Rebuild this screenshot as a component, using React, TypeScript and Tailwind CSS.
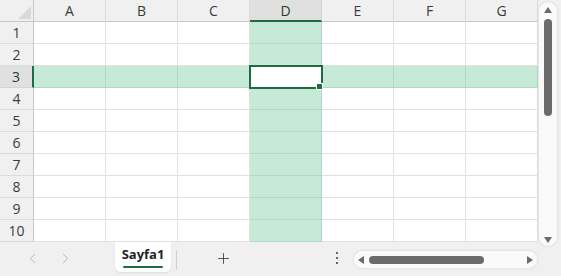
import React from "react";
import { ChevronLeft, ChevronRight, Plus } from "lucide-react";

const columns = ["A", "B", "C", "D", "E", "F", "G"];
const rows = [1, 2, 3, 4, 5, 6, 7, 8, 9, 10];
const activeCol = "D";
const activeRow = 3;

const Triangle: React.FC<{ dir: "up" | "down" | "left" | "right" }> = ({ dir }) => {
  const points = {
    up: "0,6 4,0 8,6",
    down: "0,0 8,0 4,6",
    left: "6,0 6,8 0,4",
    right: "0,0 0,8 6,4",
  }[dir];
  const size = dir === "up" || dir === "down" ? { w: 8, h: 6 } : { w: 6, h: 8 };
  return (
    <svg width={size.w} height={size.h} viewBox={`0 0 ${size.w} ${size.h}`}>
      <polygon points={points} fill="#6b6b6b" />
    </svg>
  );
};

const App: React.FC = () => {
  return (
    <div className="w-[561px] h-[276px] bg-[#f0f0f0] flex flex-col overflow-hidden font-['Open_Sans','Noto_Sans',sans-serif] text-[#3b3b3b]">
      <div className="flex h-[242px]">
        {/* Sheet grid */}
        <div className="w-[538px] bg-white grid grid-cols-[34px_repeat(7,72px)] grid-rows-[22px_repeat(10,22px)] text-[14px]">
          {/* Corner */}
          <div className="relative bg-[#f0f0f0] border-r border-b border-[#c8c8c8]">
            <svg className="absolute right-[2px] bottom-[2px]" width="13" height="13" viewBox="0 0 13 13">
              <polygon points="13,0 13,13 0,13" fill="#d9d9d9" />
            </svg>
          </div>
          {columns.map((c) =>
            c === activeCol ? (
              <div
                key={c}
                className="flex items-center justify-center bg-[#e0e0e0] border-r border-[#d4d4d4] border-b-2 border-b-[#1e6c41] text-[#1f3d2e]"
              >
                {c}
              </div>
            ) : (
              <div
                key={c}
                className="flex items-center justify-center bg-[#f0f0f0] border-r border-b border-r-[#dcdcdc] border-b-[#c8c8c8]"
              >
                {c}
              </div>
            )
          )}

          {rows.map((r) => (
            <React.Fragment key={r}>
              {r === activeRow ? (
                <div className="flex items-center justify-center bg-[#e0e0e0] border-b border-b-[#d4d4d4] border-r-2 border-r-[#1e6c41] text-[#1f3d2e]">
                  {r}
                </div>
              ) : (
                <div className="flex items-center justify-center bg-[#f0f0f0] border-r border-b border-r-[#c8c8c8] border-b-[#dcdcdc]">
                  {r}
                </div>
              )}
              {columns.map((c) => {
                if (c === activeCol && r === activeRow) {
                  return (
                    <div key={c} className="relative bg-white border-r border-b border-[#e1e1e1]">
                      <div className="absolute -left-px -top-px w-[74px] h-[24px] border-2 border-[#1e6c41] z-10">
                        <div className="absolute right-[-2px] bottom-[-3px] w-[7px] h-[7px] bg-[#1e6c41] border border-white" />
                      </div>
                    </div>
                  );
                }
                const lit = c === activeCol || r === activeRow;
                return (
                  <div
                    key={c}
                    className={
                      lit
                        ? "bg-[#c6ead7] border-r border-b border-[#b0d8c2]"
                        : "bg-white border-r border-b border-[#e1e1e1]"
                    }
                  />
                );
              })}
            </React.Fragment>
          ))}
        </div>

        {/* Vertical scrollbar */}
        <div className="flex-1 pl-px pr-1 pt-0.5">
          <div className="h-[244px] w-[18px] bg-[#fafafa] rounded-[9px] shadow-[0_0_3px_rgba(0,0,0,0.12)] flex flex-col items-center pt-[5px] pb-[3px]">
            <Triangle dir="up" />
            <div className="mt-[6px] w-[8px] h-[97px] rounded-full bg-[#6b6b6b]" />
            <div className="flex-1" />
            <Triangle dir="down" />
          </div>
        </div>
      </div>

      {/* Bottom bar */}
      <div className="flex items-start h-[34px] text-[#a8a8a8]">
        <div className="flex items-center h-[32px] pl-[24px] gap-[16px]">
          <ChevronLeft size={17} strokeWidth={1.1} />
          <ChevronRight size={17} strokeWidth={1.1} />
        </div>
        <div className="ml-[41px] w-[56px] h-[30px] bg-white rounded-b-md shadow-[0_1px_2px_rgba(0,0,0,0.08)] flex flex-col items-center pt-[3px]">
          <span className="text-[13px] font-bold text-[#242424] leading-[18px]">Sayfa1</span>
          <div className="mt-[3px] w-[40px] h-[2px] bg-[#1e6c41] rounded-full" />
        </div>
        <div className="ml-[5px] mt-[8px] w-px h-[20px] bg-[#d0d0d0]" />
        <div className="ml-[38px] h-[32px] flex items-center text-[#2b2b2b]">
          <Plus size={17} strokeWidth={1.1} />
        </div>
        <div className="ml-[104px] h-[32px] flex flex-col items-center justify-center gap-[3px]">
          <div className="w-[2px] h-[2px] bg-[#3b3b3b] rounded-full" />
          <div className="w-[2px] h-[2px] bg-[#3b3b3b] rounded-full" />
          <div className="w-[2px] h-[2px] bg-[#3b3b3b] rounded-full" />
        </div>
        <div className="ml-[16px] mt-[9px] w-[183px] h-[17px] bg-[#fafafa] rounded-full shadow-[0_0_3px_rgba(0,0,0,0.12)] flex items-center px-[4px]">
          <Triangle dir="left" />
          <div className="ml-[5px] w-[115px] h-[8px] rounded-full bg-[#6b6b6b]" />
          <div className="flex-1" />
          <Triangle dir="right" />
        </div>
      </div>
    </div>
  );
};

export default App;
